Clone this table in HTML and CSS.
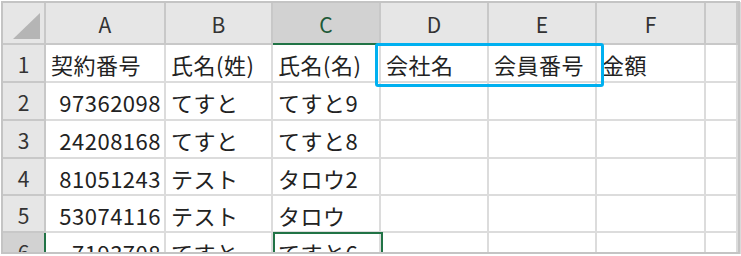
FILE: index.html
```html
<!DOCTYPE html>
<html lang="ja">
<head>
  <meta charset="UTF-8" />
  <title>顧客リスト</title>
  <link rel="stylesheet" href="styles.css">
</head>
<body>

  <!-- ワークシート -->
  <div class="sheet">
    <div class="grid">
      <!-- 列見出し -->
      <div class="hd corner"><span class="corner-mark"></span></div>
      <div class="hd col">A</div>
      <div class="hd col">B</div>
      <div class="hd col active">C</div>
      <div class="hd col">D</div>
      <div class="hd col">E</div>
      <div class="hd col">F</div>
      <div class="hd col"></div>

      <!-- 1行目 -->
      <div class="hd row">1</div>
      <div class="cell">契約番号</div>
      <div class="cell">氏名(姓)</div>
      <div class="cell">氏名(名)</div>
      <div class="cell">会社名</div>
      <div class="cell">会員番号</div>
      <div class="cell">金額</div>
      <div class="cell"></div>

      <div class="hd row">2</div>
      <div class="cell num">97362098</div>
      <div class="cell">てすと</div>
      <div class="cell">てすと9</div>
      <div class="cell"></div>
      <div class="cell"></div>
      <div class="cell"></div>
      <div class="cell"></div>

      <div class="hd row">3</div>
      <div class="cell num">24208168</div>
      <div class="cell">てすと</div>
      <div class="cell">てすと8</div>
      <div class="cell"></div>
      <div class="cell"></div>
      <div class="cell"></div>
      <div class="cell"></div>

      <div class="hd row">4</div>
      <div class="cell num">81051243</div>
      <div class="cell">テスト</div>
      <div class="cell">タロウ2</div>
      <div class="cell"></div>
      <div class="cell"></div>
      <div class="cell"></div>
      <div class="cell"></div>

      <div class="hd row">5</div>
      <div class="cell num">53074116</div>
      <div class="cell">テスト</div>
      <div class="cell">タロウ</div>
      <div class="cell"></div>
      <div class="cell"></div>
      <div class="cell"></div>
      <div class="cell"></div>

      <div class="hd row active">6</div>
      <div class="cell num">7193708</div>
      <div class="cell">てすと</div>
      <div class="cell">てすと6</div>
      <div class="cell"></div>
      <div class="cell"></div>
      <div class="cell"></div>
      <div class="cell"></div>
    </div>

    <!-- 選択中のセル -->
    <div class="active-cell"></div>
    <!-- 強調枠 (D1:E1) -->
    <div class="highlight"></div>
  </div>

</body>
</html>
```

FILE: styles.css
```css
:root {
  --grid-line: #dcdcdc;
  --head-bg: #e6e6e6;
  --head-line: #c8c8c8;
  --head-active: #d2d2d2;
  --excel-green: #217346;
  --mark: #00b0f0;
  --text: #222;
}

* {
  box-sizing: border-box;
  margin: 0;
  padding: 0;
}
body {
  background: #fff;
  font-family: "Noto Sans CJK JP", "Noto Sans", sans-serif;
  color: var(--text);
}

/* 外枠 */
.sheet {
  position: relative;
  width: 739px;
  height: 253px;
  margin: 1px 0 0 1px;
  border: 2px solid #c4c4c4;
  box-shadow: 1px 1px 0 #dadada;
  overflow: hidden;
}

.grid {
  display: grid;
  grid-template-columns: 43px 120px 107px 108px 108px 108px 109px 1fr;
  grid-template-rows: 42px 38px 38px 38px 37px 37px 38px;
  font-size: 22px;
}

/* 見出し */
.hd {
  background: var(--head-bg);
  color: #333;
  display: flex;
  align-items: center;
  justify-content: center;
  border-right: 2px solid var(--head-line);
  border-bottom: 2px solid var(--head-line);
  font-size: 21px;
  padding-top: 2px;
}
.hd.col.active {
  background: var(--head-active);
  color: #1d5a38;
  border-bottom: 2px solid var(--excel-green);
}
.hd.row.active {
  background: var(--head-active);
  border-right: 2px solid var(--excel-green);
}
.corner {
  position: relative;
}
.corner-mark {
  position: absolute;
  right: 4px;
  bottom: 4px;
  width: 0;
  height: 0;
  border-left: 27px solid transparent;
  border-bottom: 26px solid #b5b5b5;
}

/* セル */
.cell {
  display: flex;
  align-items: center;
  padding: 2px 4px 0 5px;
  letter-spacing: 0.5px;
  white-space: nowrap;
  overflow: hidden;
  border-right: 2px solid var(--grid-line);
  border-bottom: 2px solid var(--grid-line);
}
.cell.num {
  justify-content: flex-end;
  padding-right: 3px;
}

/* 選択セル C6 */
.active-cell {
  position: absolute;
  left: 270px;
  top: 229px;
  width: 110px;
  height: 40px;
  border: 2px solid var(--excel-green);
}

/* D1:E1 の強調枠 */
.highlight {
  position: absolute;
  left: 372px;
  top: 40px;
  width: 229px;
  height: 44px;
  border: 3px solid var(--mark);
  border-radius: 3px;
}
```
